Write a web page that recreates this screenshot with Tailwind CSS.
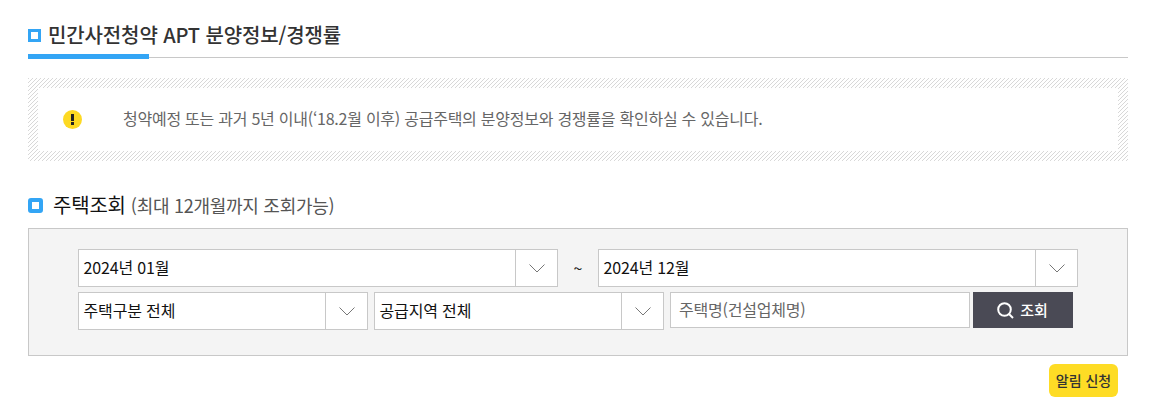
<!DOCTYPE html>
<html lang="ko">

<head>
  <meta charset="UTF-8">
  <meta name="viewport" content="width=device-width, initial-scale=1.0">
  <title>분양정보/경쟁률</title>
  <script src="https://cdn.jsdelivr.net/npm/@tailwindcss/browser@4"></script>
</head>

<body class="bg-white font-['Noto_Sans_CJK_KR',sans-serif] overflow-hidden">
  <div class="w-[1100px] ml-[28px] pt-[20px]">

    <!-- 제목 -->
    <div class="relative h-[38px] border-b border-[#c8c8c8] flex items-start">
      <span class="w-[13px] h-[13px] mt-[9px] border-[3px] border-[#33a5f5] bg-white"></span>
      <h1 class="ml-[7px] text-[20px] leading-[30px] font-medium text-[#333] tracking-[-0.12px]">민간사전청약 APT 분양정보/경쟁률</h1>
      <span class="absolute left-0 top-[34px] w-[121px] h-[5px] bg-[#33a5f5]"></span>
    </div>

    <!-- 안내 -->
    <div class="mt-[20px] h-[83px] p-[10px] bg-[linear-gradient(135deg,#d8d8d8_12.5%,#ffffff_12.5%,#ffffff_50%,#d8d8d8_50%,#d8d8d8_62.5%,#ffffff_62.5%)] bg-[length:4px_4px]">
      <div class="h-full bg-white flex items-center pl-[25px]">
        <svg class="w-[19px] h-[19px]" viewBox="0 0 19 19">
          <circle cx="9.5" cy="9.5" r="9.5" fill="#fdd923" />
          <rect x="8" y="4" width="3" height="7" fill="#222" />
          <rect x="8" y="12" width="3" height="3" fill="#222" />
        </svg>
        <p class="ml-[41px] mb-[4px] text-[16px] leading-[20px] text-[#666] tracking-[-0.25px]">청약예정 또는 과거 5년 이내(‘18.2월 이후) 공급주택의 분양정보와 경쟁률을 확인하실 수 있습니다.</p>
      </div>
    </div>

    <!-- 주택조회 -->
    <div class="mt-[32px] h-[24px] flex items-center">
      <span class="w-[15px] h-[15px] rounded-[3px] border-[4px] border-[#33a5f5] bg-white"></span>
      <h2 class="ml-[10px] text-[20px] leading-[24px] text-[#111] tracking-[-0.2px]">주택조회</h2>
      <span class="ml-[5px] text-[18px] leading-[24px] text-[#555] tracking-[-0.27px]">(최대 12개월까지 조회가능)</span>
    </div>

    <div class="mt-[11px] h-[128px] border border-[#c8c8c8] bg-[#f4f4f4] pl-[49px] pt-[20px]">
      <div class="flex items-center">
        <div class="w-[480px] h-[38px] border border-[#c8c8c8] bg-white flex">
          <span class="flex-1 pl-[4.5px] text-[16px] leading-[35px] text-[#111] tracking-[-0.15px]">2024년 01월</span>
          <span class="w-[42px] border-l border-[#c8c8c8] flex items-center justify-center">
            <svg class="w-[16px] h-[9px]" viewBox="0 0 16 9" fill="none" stroke="#777" stroke-width="1"><path d="M0.5 0.5L8 8L15.5 0.5" /></svg>
          </span>
        </div>
        <span class="w-[40px] text-center text-[16px] text-[#222]">~</span>
        <div class="w-[480px] h-[38px] border border-[#c8c8c8] bg-white flex">
          <span class="flex-1 pl-[4.5px] text-[16px] leading-[35px] text-[#111] tracking-[-0.15px]">2024년 12월</span>
          <span class="w-[42px] border-l border-[#c8c8c8] flex items-center justify-center">
            <svg class="w-[16px] h-[9px]" viewBox="0 0 16 9" fill="none" stroke="#777" stroke-width="1"><path d="M0.5 0.5L8 8L15.5 0.5" /></svg>
          </span>
        </div>
      </div>

      <div class="flex mt-[5px]">
        <div class="w-[290px] h-[38px] border border-[#c8c8c8] bg-white flex">
          <span class="flex-1 pl-[4.5px] text-[16px] leading-[35px] text-[#111] tracking-[-0.15px]">주택구분 전체</span>
          <span class="w-[42px] border-l border-[#c8c8c8] flex items-center justify-center">
            <svg class="w-[16px] h-[9px]" viewBox="0 0 16 9" fill="none" stroke="#777" stroke-width="1"><path d="M0.5 0.5L8 8L15.5 0.5" /></svg>
          </span>
        </div>
        <div class="ml-[6px] w-[290px] h-[38px] border border-[#c8c8c8] bg-white flex">
          <span class="flex-1 pl-[4.5px] text-[16px] leading-[35px] text-[#111] tracking-[-0.15px]">공급지역 전체</span>
          <span class="w-[42px] border-l border-[#c8c8c8] flex items-center justify-center">
            <svg class="w-[16px] h-[9px]" viewBox="0 0 16 9" fill="none" stroke="#777" stroke-width="1"><path d="M0.5 0.5L8 8L15.5 0.5" /></svg>
          </span>
        </div>
        <div class="ml-[6px] w-[300px] h-[36px] border border-[#c8c8c8] bg-white pl-[8px] text-[16px] leading-[33px] text-[#666] tracking-[-0.2px]">주택명(건설업체명)</div>
        <button class="ml-[3px] w-[100px] h-[36px] bg-[#4a4a55] text-white flex items-center justify-center text-[15px] font-medium">
          <svg class="w-[17px] h-[17px] mr-[6px] -ml-[1px]" viewBox="0 0 17 17" fill="none" stroke="#fff" stroke-width="2"><circle cx="7.5" cy="7.5" r="6.3" /><path d="M12 12L16 16" /></svg>
          조회
        </button>
      </div>
    </div>

    <div class="flex justify-end mt-[8px] pr-[10px]">
      <button class="w-[69px] h-[33px] rounded-[6px] bg-[#fedc25] text-[14px] font-medium text-[#333]">알림 신청</button>
    </div>
  </div>
</body>

</html>
